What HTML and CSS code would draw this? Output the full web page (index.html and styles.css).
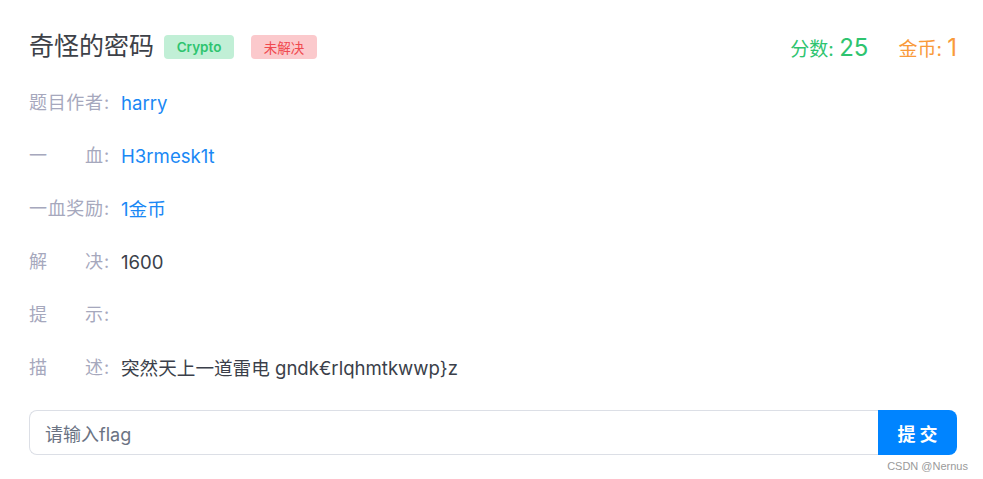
FILE: index.html
```html
<!DOCTYPE html>
<html lang="zh">
<head>
<meta charset="utf-8">
<link rel="stylesheet" href="styles.css">
</head>
<body>
<div class="card">
  <div class="head">
    <div class="title-wrap">
      <h1 class="title">奇怪的密码</h1>
      <span class="badge badge-green">Crypto</span>
      <span class="badge badge-red">未解决</span>
    </div>
    <div class="stats">
      <span class="score">分数: <b>25</b></span>
      <span class="coin">金币: <b>1</b></span>
    </div>
  </div>
  <div class="rows">
    <div class="row"><span class="label">题目作者</span><span class="colon">:</span><span class="val link">harry</span></div>
    <div class="row"><span class="label">一血</span><span class="colon">:</span><span class="val link">H3rmesk1t</span></div>
    <div class="row"><span class="label">一血奖励</span><span class="colon">:</span><span class="val link">1金币</span></div>
    <div class="row"><span class="label">解决</span><span class="colon">:</span><span class="val">1600</span></div>
    <div class="row"><span class="label">提示</span><span class="colon">:</span><span class="val"></span></div>
    <div class="row"><span class="label">描述</span><span class="colon">:</span><span class="val">突然天上一道雷电 gndk€rlqhmtkwwp}z</span></div>
  </div>
  <div class="submit">
    <div class="input">请输入flag</div>
    <div class="btn">提交</div>
  </div>
  <div class="mark">CSDN @Nernus</div>
</div>
</body>
</html>
```
FILE: styles.css
```css
* { box-sizing: border-box; }
html, body { margin: 0; padding: 0; background: #fff; }
body {
  font-family: "Inter", "Noto Sans CJK SC", sans-serif;
  color: #3b3f4a;
}
.card {
  padding: 30px 26px 0 29px;
}
.head {
  display: flex;
  justify-content: space-between;
  align-items: center;
  height: 32px;
}
.title-wrap {
  display: flex;
  align-items: center;
}
.title {
  margin: 0;
  font-size: 25px;
  font-weight: 400;
  color: #3d4148;
  line-height: 32px;
}
.badge {
  display: inline-flex;
  align-items: center;
  justify-content: center;
  height: 24px;
  border-radius: 4px;
  font-size: 13.5px;
  margin-top: 1px;
}
.badge-green {
  margin-left: 10px;
  width: 70px;
  background: #c1efd6;
  color: #2ec46f;
  font-weight: 600;
}
.badge-red {
  margin-left: 17px;
  width: 66px;
  background: #fbc9cc;
  color: #f0494f;
}
.stats {
  display: flex;
  align-items: baseline;
  gap: 30px;
  font-size: 19px;
  margin-top: 2px;
}
.stats b { font-weight: 400; font-size: 24px; }
.score { color: #2ec46f; }
.coin { color: #f99a3a; }
.rows {
  padding-top: 27px;
  display: flex;
  flex-direction: column;
  gap: 25px;
}
.row {
  display: flex;
  align-items: center;
  height: 28px;
  font-size: 18px;
  line-height: 28px;
}
.label {
  width: 74px;
  color: #a6a8bd;
  text-align: justify;
  text-align-last: justify;
}
.colon {
  color: #a6a8bd;
  width: 18px;
  padding-left: 1px;
}
.val { color: #3b3f4a; font-size: 18.6px; }
.link { color: #1a88f5; }
.submit {
  display: flex;
  margin-top: 28px;
  height: 45px;
}
.input {
  flex: 1;
  border: 1px solid #dcdfe6;
  border-right: none;
  border-radius: 8px 0 0 8px;
  padding-left: 15px;
  display: flex;
  align-items: center;
  font-size: 18px;
  color: #6b7383;
}
.btn {
  width: 79px;
  background: #0084ff;
  color: #fff;
  border-radius: 0 8px 8px 0;
  display: flex;
  align-items: center;
  justify-content: center;
  font-size: 18px;
  font-weight: 700;
  letter-spacing: 4px;
  padding-left: 4px;
}
.mark {
  text-align: right;
  font-family: "Liberation Sans", "Noto Sans CJK SC", sans-serif;
  font-size: 11px;
  color: #9a9a9a;
  margin-top: 5px;
  margin-right: -11px;
}
```
